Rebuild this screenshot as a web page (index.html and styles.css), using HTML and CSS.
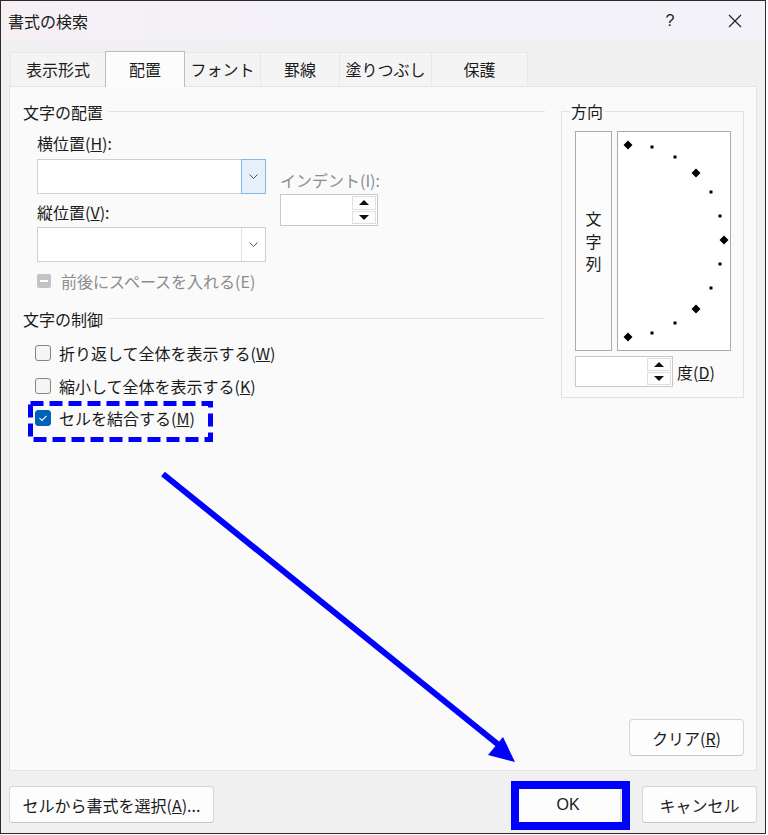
FILE: index.html
```html
<!DOCTYPE html>
<html lang="ja">
<head>
<meta charset="utf-8">
<title>書式の検索</title>
<link rel="stylesheet" href="styles.css">
</head>
<body>
<div class="window">
  <div class="titlebar">
    <span class="title">書式の検索</span>
    <span class="help">?</span>
    <span class="close">
      <svg width="14" height="14" viewBox="0 0 14 14"><path d="M1 1 L13 13 M13 1 L1 13" stroke="#1a1a1a" stroke-width="1.1" fill="none"/></svg>
    </span>
  </div>
  <div class="body">
    <div class="tabs">
      <div class="tab w1">表示形式</div>
      <div class="tab active w2">配置</div>
      <div class="tab w3">フォント</div>
      <div class="tab w4">罫線</div>
      <div class="tab w5">塗りつぶし</div>
      <div class="tab w6">保護</div>
    </div>
    <div class="panel">
      <div class="panel-main">
        <div class="left">
          <div class="section-head"><span>文字の配置</span><i class="rule"></i></div>
          <div class="align-grid">
            <div class="col-pos">
              <div class="label l1">横位置(<u>H</u>):</div>
              <div class="combo c1">
                <div class="combo-btn focus">
                  <svg width="9" height="5" viewBox="0 0 9 5"><path d="M0.5 0.5 L4.5 4.5 L8.5 0.5" stroke="#555" stroke-width="1" fill="none"/></svg>
                </div>
              </div>
              <div class="label l2">縦位置(<u>V</u>):</div>
              <div class="combo c2">
                <div class="combo-btn">
                  <svg width="9" height="5" viewBox="0 0 9 5"><path d="M0.5 0.5 L4.5 4.5 L8.5 0.5" stroke="#555" stroke-width="1" fill="none"/></svg>
                </div>
              </div>
            </div>
            <div class="col-indent">
              <div class="label disabled">インデント(I):</div>
              <div class="spin">
                <div class="spin-btns">
                  <span class="sb"><i class="tri up"></i></span>
                  <span class="sb"><i class="tri down"></i></span>
                </div>
              </div>
            </div>
          </div>
          <div class="check-row disabled-row">
            <span class="dbox"><i></i></span>
            <span class="disabled">前後にスペースを入れる(E)</span>
          </div>
          <div class="section-head s2"><span>文字の制御</span><i class="rule"></i></div>
          <div class="check-row r1"><span class="box"></span><span>折り返して全体を表示する(<u>W</u>)</span></div>
          <div class="check-row r2"><span class="box"></span><span>縮小して全体を表示する(<u>K</u>)</span></div>
          <div class="check-row r3">
            <span class="box checked">
              <svg width="16" height="16" viewBox="0 0 16 16"><path d="M4.5 8.2 L7 10.5 L11.5 5.8" stroke="#fff" stroke-width="1.1" fill="none"/></svg>
            </span>
            <span>セルを結合する(<u>M</u>)</span>
          </div>
        </div>
        <div class="direction">
          <div class="legend">方向</div>
          <div class="dir-boxes">
            <div class="vbox"><div class="vtext"><span>文</span><span>字</span><span>列</span></div></div>
            <div class="obox">
              <svg width="112" height="218" viewBox="0 0 112 218">
                <g fill="#000">
                  <path d="M10 8.5 L14.5 13 L10 17.5 L5.5 13 Z"/>
                  <path d="M78 36.5 L82.5 41 L78 45.5 L73.5 41 Z"/>
                  <path d="M106 103.5 L110.5 108 L106 112.5 L101.5 108 Z"/>
                  <path d="M78 172.5 L82.5 177 L78 181.5 L73.5 177 Z"/>
                  <path d="M10 200.5 L14.5 205 L10 209.5 L5.5 205 Z"/>
                  <rect x="32.5" y="13.5" width="3" height="3"/>
                  <rect x="55.5" y="23.5" width="3" height="3"/>
                  <rect x="91.5" y="58.5" width="3" height="3"/>
                  <rect x="100.5" y="82.5" width="3" height="3"/>
                  <rect x="100.5" y="130.5" width="3" height="3"/>
                  <rect x="91.5" y="154.5" width="3" height="3"/>
                  <rect x="55.5" y="189.5" width="3" height="3"/>
                  <rect x="32.5" y="199.5" width="3" height="3"/>
                </g>
              </svg>
            </div>
          </div>
          <div class="deg-row">
            <div class="spin deg">
              <div class="spin-btns">
                <span class="sb"><i class="tri up"></i></span>
                <span class="sb"><i class="tri down"></i></span>
              </div>
            </div>
            <span class="deg-label">度(<u>D</u>)</span>
          </div>
        </div>
      </div>
      <div class="panel-foot">
        <button class="btn clear">クリア(<u>R</u>)</button>
      </div>
    </div>
    <div class="footer">
      <button class="btn pick">セルから書式を選択(<u>A</u>)...</button>
      <span class="spacer"></span>
      <button class="btn ok">OK</button>
      <button class="btn cancel">キャンセル</button>
    </div>
  </div>
</div>
<svg class="annot" width="768" height="835" viewBox="0 0 768 835">
  <rect x="30.5" y="403.5" width="180" height="36" fill="none" stroke="#0000ff" stroke-width="5" stroke-dasharray="13 6"/>
  <line x1="163" y1="474" x2="500" y2="746" stroke="#0000ff" stroke-width="6"/>
  <polygon points="515,762 488,755 503,737" fill="#0000ff"/>
  <rect x="515" y="785" width="111" height="41" fill="none" stroke="#0000ff" stroke-width="8"/>
</svg>
</body>
</html>
```

FILE: styles.css
```css
html, body {
  margin: 0;
  padding: 0;
  background: #ffffff;
}

body {
  font-family: "Noto Sans CJK JP", "Noto Sans", sans-serif;
  font-size: 16px;
  color: #1b1b1b;
}

.window {
  position: relative;
  box-sizing: border-box;
  width: 766px;
  height: 834px;
  border: 1px solid #2b2b2b;
  background: #f0f0f0;
  overflow: hidden;
}

.titlebar {
  height: 39px;
  display: flex;
  align-items: center;
  padding-left: 7px;
  background: linear-gradient(90deg, #f6f0f5 0%, #f3f2f8 40%, #f2f2f8 100%);
}

.title {
  flex: 1;
  line-height: 20px;
  font-size: 16px;
  color: #1a1a1a;
}

.help {
  width: 46px;
  text-align: center;
  margin-right: 19px;
  font-size: 16px;
  line-height: 20px;
  font-family: "Liberation Sans", sans-serif;
}

.close {
  width: 46px;
  margin-right: 7px;
  display: flex;
  justify-content: center;
  align-items: center;
}

.body {
  padding-left: 8px;
}

.tabs {
  display: flex;
  margin-top: 12px;
  margin-left: 1px;
  height: 34px;
  position: relative;
  z-index: 2;
}

.tab {
  box-sizing: border-box;
  height: 34px;
  line-height: 32px;
  text-align: center;
  background: #f4f4f4;
  border: 1px solid #e8e8e8;
  border-bottom: none;
  margin-right: -1px;
  font-size: 16px;
}

.tab.active {
  height: 36px;
  margin-top: -1px;
  background: #fcfcfc;
  border: 1px solid #bdbdbd;
  border-bottom: none;
  line-height: 34px;
  position: relative;
  z-index: 3;
}

.w1 { width: 96px; }
.w2 { width: 80px; }
.w3 { width: 77px; }
.w4 { width: 80px; }
.w5 { width: 93px; }
.w6 { width: 97px; }

.panel {
  box-sizing: border-box;
  width: 748px;
  height: 685px;
  background: #fafafa;
  border: 1px solid #e4e4e4;
  display: flex;
  flex-direction: column;
  position: relative;
  z-index: 1;
}

.panel-main {
  display: flex;
}

.left {
  width: 522px;
  margin-left: 13px;
  padding-top: 15px;
}

.section-head {
  display: flex;
  align-items: center;
  height: 20px;
  line-height: 20px;
}

.section-head .rule {
  flex: 1;
  height: 1px;
  background: #e3e3e3;
  margin-left: 5px;
  margin-top: -2px;
}

.section-head.s2 {
  margin-top: 18px;
}

.align-grid {
  display: flex;
  margin-left: 14px;
}

.col-pos {
  width: 229px;
}

.label {
  height: 20px;
  line-height: 20px;
  white-space: nowrap;
}

.l1 { margin-top: 11px; }
.l2 { margin-top: 8px; }

.disabled {
  color: #8c8c8c;
}

.combo {
  box-sizing: border-box;
  height: 35px;
  background: #ffffff;
  border: 1px solid #cfcfcf;
  display: flex;
  justify-content: flex-end;
}

.c1 { margin-top: 6px; }
.c2 { margin-top: 5px; }

.combo-btn {
  box-sizing: border-box;
  width: 24px;
  display: flex;
  align-items: center;
  justify-content: center;
  border-left: 1px solid #e2e2e2;
}

.combo-btn.focus {
  width: 25px;
  margin: -1px -1px -1px 0;
  background: #e5f0fb;
  border: 1px solid #86b9e9;
}

.col-indent {
  width: 98px;
  margin-left: 14px;
  padding-top: 48px;
}

.spin {
  box-sizing: border-box;
  margin-top: 4px;
  height: 32px;
  background: #ffffff;
  border: 1px solid #c9c9c9;
  display: flex;
  justify-content: flex-end;
}

.spin-btns {
  width: 24px;
  display: flex;
  flex-direction: column;
  padding: 1px 1px 1px 0;
  gap: 1px;
}

.sb {
  flex: 1;
  display: flex;
  align-items: center;
  justify-content: center;
  border: 1px solid #dedede;
  background: #fdfdfd;
}

.tri {
  width: 0;
  height: 0;
  border-left: 5px solid transparent;
  border-right: 5px solid transparent;
}

.tri.up { border-bottom: 5px solid #111; }
.tri.down { border-top: 5px solid #111; }

.check-row {
  display: flex;
  align-items: center;
  height: 20px;
  line-height: 20px;
  padding-left: 12px;
  white-space: nowrap;
}

.check-row .box {
  box-sizing: border-box;
  width: 16px;
  height: 16px;
  border: 1px solid #858585;
  border-radius: 3px;
  background: #f5f5f5;
  margin-right: 8px;
  display: flex;
}

.check-row .box.checked {
  background: #0061ba;
  border-color: #0061ba;
}

.check-row .box.checked svg {
  margin: -1px;
}

.disabled-row {
  margin-top: 9px;
  padding-left: 14px;
}

.dbox {
  width: 14px;
  height: 14px;
  border-radius: 2px;
  background: #c3c3c3;
  margin-right: 10px;
  display: flex;
  align-items: center;
  justify-content: center;
}

.dbox i {
  width: 8px;
  height: 2px;
  background: #ffffff;
}

.r1 { margin-top: 14px; }
.r2 { margin-top: 13px; }
.r3 { margin-top: 12px; }

.direction {
  box-sizing: border-box;
  width: 183px;
  height: 287px;
  margin-left: 16px;
  margin-top: 24px;
  border: 1px solid #e1e1e1;
  padding-left: 13px;
}

.legend {
  width: fit-content;
  margin: -11px 0 0 -5px;
  padding: 0 1px;
  height: 20px;
  line-height: 20px;
  background: #fafafa;
}

.dir-boxes {
  display: flex;
  gap: 5px;
  margin-top: 10px;
}

.vbox {
  box-sizing: border-box;
  width: 37px;
  height: 220px;
  border: 1px solid #ababab;
  background: #fcfcfc;
  display: flex;
  align-items: center;
  justify-content: center;
}

.vtext {
  display: flex;
  flex-direction: column;
  align-items: center;
  line-height: 22.5px;
  font-size: 16px;
}

.obox {
  box-sizing: border-box;
  width: 114px;
  height: 220px;
  border: 1px solid #ababab;
  background: #ffffff;
}

.obox svg {
  display: block;
}

.deg-row {
  display: flex;
  align-items: center;
  margin-top: 5px;
}

.spin.deg {
  margin-top: 0;
  width: 98px;
  height: 31px;
}

.deg-label {
  margin-left: 4px;
  line-height: 20px;
}

.panel-foot {
  margin-top: auto;
  display: flex;
  justify-content: flex-end;
  padding: 0 12px 14px 0;
}

.btn {
  box-sizing: border-box;
  height: 37px;
  font-family: "Noto Sans CJK JP", "Noto Sans", sans-serif;
  font-size: 16px;
  color: #1b1b1b;
  background: #fdfdfd;
  border: 1px solid #d6d6d6;
  border-bottom-color: #c5c5c5;
  border-radius: 4px;
  padding: 0;
  line-height: 20px;
}

.clear { width: 115px; }

.footer {
  display: flex;
  padding-top: 15px;
  width: 748px;
}

.pick { width: 205px; }

.spacer { flex: 1; }

.ok {
  width: 106px;
  margin-right: 21px;
  font-family: "Liberation Sans", "Noto Sans", sans-serif;
}

.cancel { width: 115px; }

.annot {
  position: absolute;
  left: 0;
  top: 0;
  z-index: 10;
  pointer-events: none;
}
```
